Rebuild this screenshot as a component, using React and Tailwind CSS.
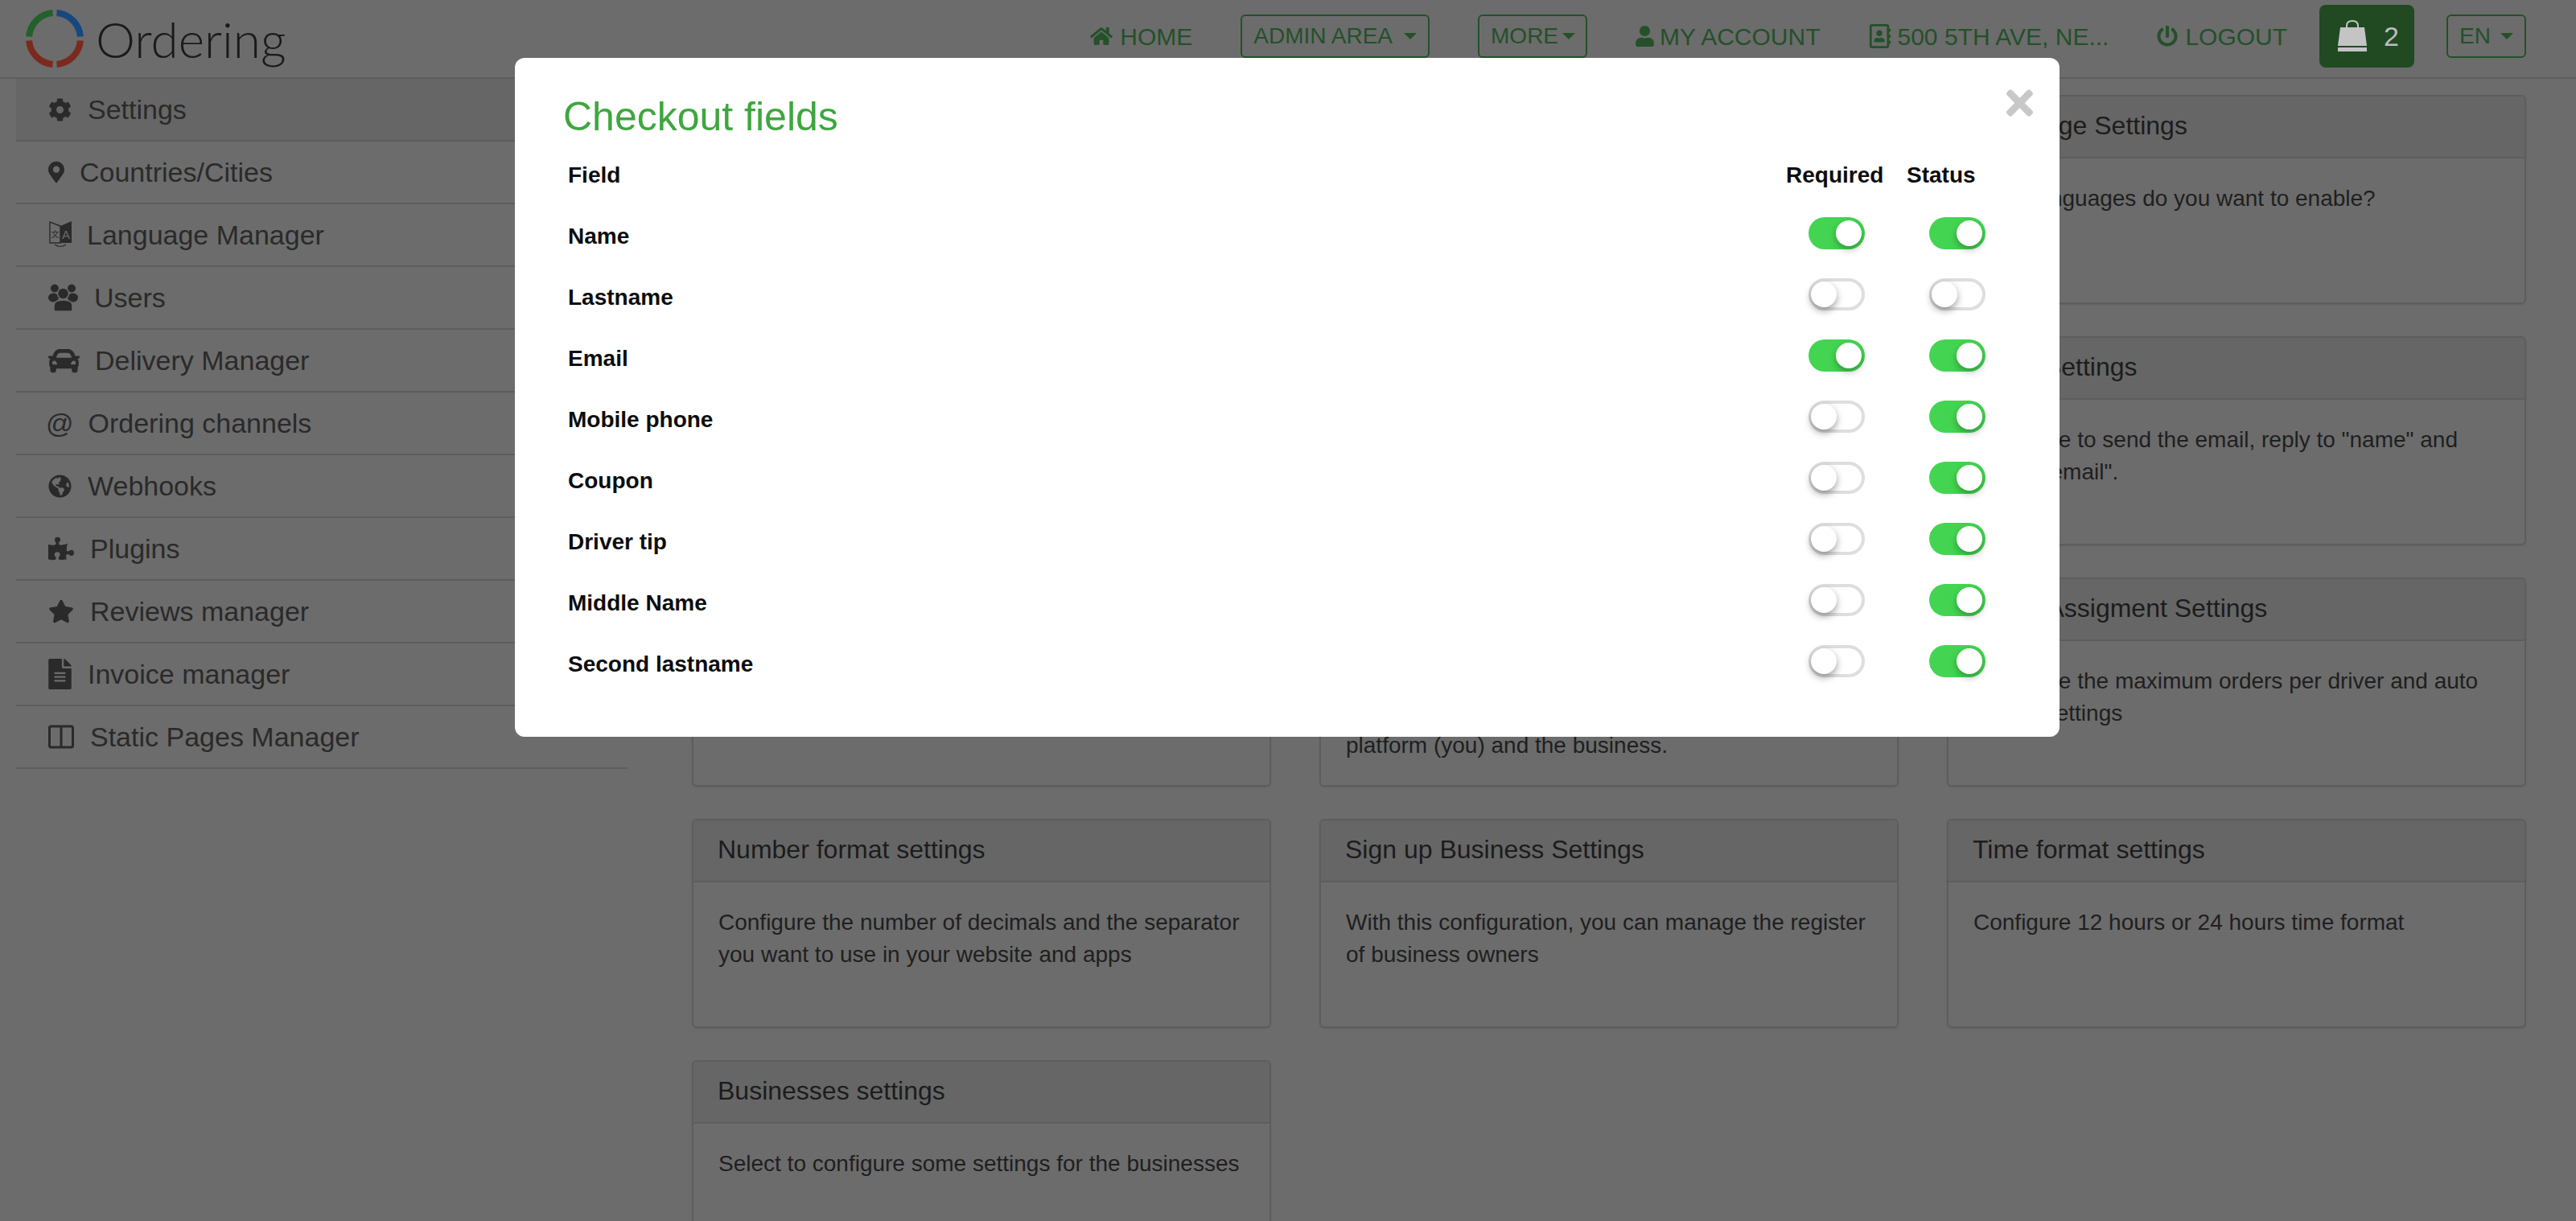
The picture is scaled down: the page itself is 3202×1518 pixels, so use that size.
import React from "react";
import {
  FaCar,
  FaCog,
  FaFileAlt,
  FaGlobeAmericas,
  FaHome,
  FaMapMarkerAlt,
  FaPowerOff,
  FaPuzzlePiece,
  FaRegAddressBook,
  FaStar,
  FaTimes,
  FaUser,
} from "react-icons/fa";

const LanguageIcon = () => (
  <svg width="30" height="34" viewBox="0 0 30 34" className="shrink-0">
    <path d="M15 6 L2 1 L2 27 L15 27 Z" fill="none" stroke="#2a2a2a" strokeWidth="1.4" />
    <path d="M15 6 L29 0 L29 27 L15 27 Z" fill="#2a2a2a" />
    <text x="22" y="22" fontSize="15" textAnchor="middle" fill="#6c6c6c">A</text>
    <text x="8.5" y="20" fontSize="10" textAnchor="middle" fill="#2a2a2a" fontFamily="Noto Sans CJK SC">文</text>
    <path d="M8 29 Q15 34 22 29" fill="none" stroke="#2a2a2a" strokeWidth="1.2" />
  </svg>
);

const UsersIcon = () => (
  <svg width="37" height="34" viewBox="0 0 37 34" className="shrink-0 mr-[20px]" fill="#2a2a2a">
    <circle cx="8" cy="5.5" r="5" />
    <circle cx="29" cy="5.5" r="5" />
    <ellipse cx="6.5" cy="17" rx="6.5" ry="5.5" />
    <ellipse cx="30.5" cy="17" rx="6.5" ry="5.5" />
    <circle cx="18.5" cy="12" r="7" stroke="#6c6c6c" strokeWidth="1.5" />
    <path d="M7 34 V27 Q7 20 18.5 20 Q30 20 30 27 V34 Z" stroke="#6c6c6c" strokeWidth="1.5" />
  </svg>
);

const ColumnsIcon = () => (
  <svg width="32" height="30" viewBox="0 0 32 30" className="shrink-0 mr-[20px]" fill="none" stroke="#2a2a2a">
    <rect x="1.5" y="2" width="29" height="26" rx="2" strokeWidth="3" />
    <path d="M16 2 V28" strokeWidth="3" />
  </svg>
);

const sidebarItems = [
  { label: "Settings", active: true, icon: <FaCog className="w-[29px] h-[29px] shrink-0 mr-[20px]" /> },
  { label: "Countries/Cities", icon: <FaMapMarkerAlt className="w-[20px] h-[28px] shrink-0 mr-[19px]" /> },
  { label: "Language Manager", icon: <span className="mr-[18px] flex"><LanguageIcon /></span> },
  { label: "Users", icon: <UsersIcon /> },
  { label: "Delivery Manager", icon: <FaCar className="w-[39px] h-[39px] shrink-0 mr-[19px]" /> },
  { label: "Ordering channels", icon: <span className="-ml-[3px] mr-[18px]">@</span> },
  { label: "Webhooks", icon: <FaGlobeAmericas className="w-[29px] h-[29px] shrink-0 mr-[20px]" /> },
  { label: "Plugins", icon: <FaPuzzlePiece className="w-[32px] h-[30px] shrink-0 mr-[20px]" /> },
  { label: "Reviews manager", icon: <FaStar className="w-[32px] h-[30px] shrink-0 mr-[20px]" /> },
  { label: "Invoice manager", icon: <FaFileAlt className="w-[29px] h-[38px] shrink-0 mr-[20px]" /> },
  { label: "Static Pages Manager", icon: <ColumnsIcon /> },
];

// the cards without text sit completely behind the modal
const cards = [
  {},
  {},
  { title: "Language Settings", text: "What languages do you want to enable?" },
  {},
  {},
  { title: "Email Settings", text: 'Configure to send the email, reply to "name" and name, "email".' },
  {},
  { text: "\n\nplatform (you) and the business." },
  { title: "Driver Assigment Settings", text: "Configure the maximum orders per driver and auto assign settings" },
  { title: "Number format settings", text: "Configure the number of decimals and the separator you want to use in your website and apps" },
  { title: "Sign up Business Settings", text: "With this configuration, you can manage the register of business owners" },
  { title: "Time format settings", text: "Configure 12 hours or 24 hours time format" },
  { title: "Businesses settings", text: "Select to configure some settings for the businesses" },
];

const fields = [
  { name: "Name", required: true, status: true },
  { name: "Lastname", required: false, status: false },
  { name: "Email", required: true, status: true },
  { name: "Mobile phone", required: false, status: true },
  { name: "Coupon", required: false, status: true },
  { name: "Driver tip", required: false, status: true },
  { name: "Middle Name", required: false, status: true },
  { name: "Second lastname", required: false, status: true },
];

const Caret = () => (
  <span className="w-0 h-0 border-x-[8px] border-t-[8px] border-x-transparent border-t-[#24502a]" />
);

const Toggle = ({ on }) => (
  <div className="w-[150px] pl-[29px]">
    <div
      className={
        on
          ? "relative w-[70px] h-[40px] mb-[8px] rounded-full bg-[#43d551]"
          : "relative w-[70px] h-[40px] mb-[8px] rounded-full border-4 border-[#dedede] bg-white"
      }
    >
      <div
        className={
          on
            ? "absolute right-[4px] top-[4px] w-[32px] h-[32px] rounded-full bg-white shadow-[0_4px_10px_rgba(0,0,0,0.3)]"
            : "absolute -left-px top-0 w-[32px] h-[32px] rounded-full bg-white shadow-[0_4px_10px_rgba(0,0,0,0.38)]"
        }
      />
    </div>
  </div>
);

const Header = () => (
  <header className="h-[98px] pb-[6px] border-b-2 border-[#5d5d5d] flex items-center justify-between pr-[62px] text-[#24502a] whitespace-nowrap">
    <div className="flex items-center pl-[32px] pt-[6px]">
      <svg width="72" height="72" viewBox="0 0 72 72" fill="none" strokeWidth="8">
        <path d="M4.1 33.5 A32 32 0 0 1 33.5 4.1" stroke="#23602c" />
        <path d="M38.5 4.1 A32 32 0 0 1 67.9 33.5" stroke="#17477f" />
        <path d="M67.9 38.5 A32 32 0 0 1 38.5 67.9" stroke="#7a2a1e" />
        <path d="M33.5 67.9 A32 32 0 0 1 4.1 38.5" stroke="#7a2a1e" />
      </svg>
      <span className="ml-[15px] font-['Lato',sans-serif] font-light text-[62px] leading-none text-[#1a1a1a]">Ordering</span>
    </div>
    <div className="flex items-center gap-[40px]">
      <nav className="flex items-center gap-[60px] text-[30px]">
        <a className="flex items-center gap-[9px]"><FaHome className="w-[28px] h-[26px]" />HOME</a>
        <a className="h-[54px] flex items-center gap-[14px] px-[14px] border-2 border-[#24502a] rounded-[6px] text-[28px]">ADMIN AREA<Caret /></a>
        <a className="h-[54px] flex items-center gap-[5px] pl-[14px] pr-[13px] border-2 border-[#24502a] rounded-[6px] text-[28px]">MORE<Caret /></a>
        <a className="flex items-center gap-[7px]"><FaUser className="w-[23px] h-[26px]" />MY ACCOUNT</a>
        <a className="flex items-center gap-[8px]"><FaRegAddressBook className="w-[28px] h-[30px]" />500 5TH AVE, NE...</a>
        <a className="flex items-center gap-[9px]"><FaPowerOff className="w-[26px] h-[28px]" />LOGOUT</a>
      </nav>
      <button className="w-[118px] h-[78px] pl-[21px] flex items-center gap-[19px] bg-[#214a22] rounded-[8px] text-[#bdbdbd] text-[34px]">
        <svg width="40" height="40" viewBox="0 0 40 40" className="shrink-0">
          <path d="M13 14 V7 Q13 1 20 1 Q27 1 27 7 V14" fill="none" stroke="#c4c4c4" strokeWidth="2" />
          <path d="M5 9 H35 L38 32 H2 Z" fill="#c4c4c4" />
          <rect x="2" y="34" width="36" height="5" fill="#c4c4c4" />
        </svg>
        2
      </button>
      <button className="h-[54px] flex items-center gap-[12px] px-[14px] border-2 border-[#24502a] rounded-[6px] text-[28px]">EN<Caret /></button>
    </div>
  </header>
);

const Sidebar = () => (
  <aside className="w-[760px] ml-[20px] shrink-0 text-[34px] text-[#2a2a2a]">
    {sidebarItems.map((item) => (
      <div
        key={item.label}
        className={
          item.active
            ? "h-[78px] pl-[40px] flex items-center border-b-2 border-[#5d5d5d] bg-[#666666]"
            : "h-[78px] pl-[40px] flex items-center border-b-2 border-[#5d5d5d]"
        }
      >
        {item.icon}
        <span>{item.label}</span>
      </div>
    ))}
  </aside>
);

const Card = ({ title, text }) => (
  <div className="h-[260px] border-2 border-[#5d5d5d] rounded-[6px] shadow-[0_1px_2px_rgba(0,0,0,0.1)]">
    <div className="h-[77px] px-[30px] pb-[4px] flex items-center bg-[#666666] border-b-2 border-[#5d5d5d] text-[32px] text-[#1c1c1c] rounded-t-[4px]">
      {title}
    </div>
    <p className="px-[31px] pt-[30px] text-[28px] leading-[40px] text-[#1f1f1f] whitespace-pre-line">{text}</p>
  </div>
);

const CheckoutFieldsModal = () => (
  <div className="absolute left-[640px] top-[72px] w-[1920px] pt-[43px] pl-[60px] pr-[41px] pb-[52px] bg-white rounded-[12px]">
    <FaTimes className="absolute right-[33px] top-[32px] w-[33px] h-[48px] text-[#c8c8c8]" />
    <h3 className="text-[50px] leading-[60px] mb-[5px] text-[#3fa63f]">Checkout fields</h3>
    <div className="pl-[6px] text-[28px] font-bold text-[#0d0d0d]">
      <div className="h-[76px] flex items-center">
        <div className="flex-1">Field</div>
        <div className="w-[150px] pl-px">Required</div>
        <div className="w-[150px] pl-px">Status</div>
      </div>
      {fields.map((field) => (
        <div key={field.name} className="h-[76px] flex items-center">
          <div className="flex-1">{field.name}</div>
          <Toggle on={field.required} />
          <Toggle on={field.status} />
        </div>
      ))}
    </div>
  </div>
);

export default function App() {
  return (
    <div className="relative h-screen overflow-hidden bg-[#6c6c6c] font-['Liberation_Sans',Arial,sans-serif]">
      <Header />
      <div className="flex">
        <Sidebar />
        <main className="ml-[80px] pt-[20px] grid grid-cols-[720px_720px_720px] gap-x-[60px] gap-y-[40px]">
          {cards.map((card, i) => (
            <Card key={i} title={card.title} text={card.text} />
          ))}
        </main>
      </div>
      <CheckoutFieldsModal />
    </div>
  );
}
